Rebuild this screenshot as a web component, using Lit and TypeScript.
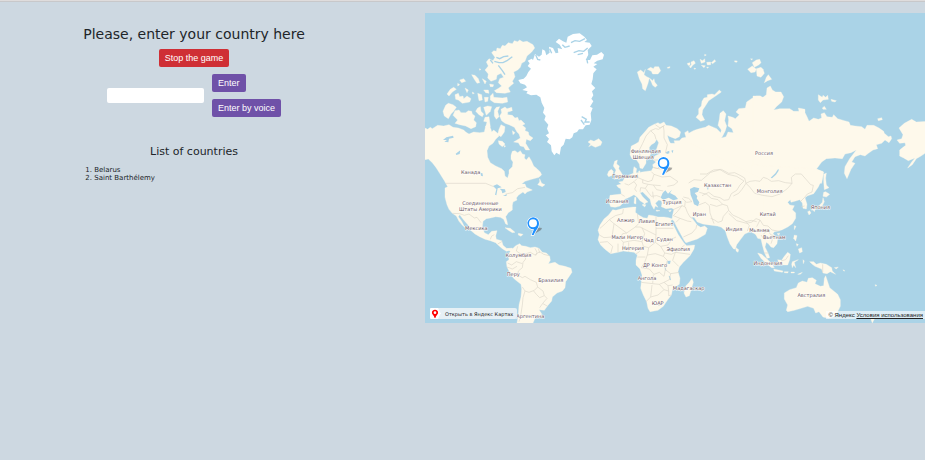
import { LitElement, html, svg, css } from "lit";
import { customElement, state } from "lit/decorators.js";

type Sheet = { x: number; y: number; d: string[] };
type Label = [number, number, string];

const land: Sheet[] = [
  { x: 0, y: 291, d: [
    "M-5,52 8,58 16,52 22,56 38,46 56,48 72,44 84,52 100,54 116,60 122,66 132,72 146,66 164,68 178,66 182,48 192,46 198,58 200,66 206,60 218,70 222,78 212,88 204,100 192,108 186,122 188,142 196,158 212,168 230,176 238,184 240,198 248,204 252,190 252,180 262,170 264,156 258,148 258,136 262,124 270,122 278,128 286,122 292,132 300,134 298,144 304,150 312,140 320,154 326,168 336,176 346,186 350,194 342,202 320,208 300,214 290,222 300,222 304,232 322,240 306,246 300,252 294,246 280,256 274,264 276,270 264,276 262,286 262,300 250,308 242,320 246,334 248,344 242,342 236,328 226,322 212,320 196,324 184,326 174,334 172,350 178,368 190,374 200,364 216,362 212,378 214,388 230,392 234,406 246,416 262,414 262,420 244,424 232,416 220,406 212,398 196,392 180,388 164,380 150,372 136,360 130,346 118,332 104,314 100,320 110,334 116,346 124,356 112,346 102,334 94,318 82,310 72,298 66,284 60,262 60,234 68,230 58,212 44,190 34,174 22,158 10,147 -5,150Z",
    "M344,206 350,220 360,224 352,230 338,224 344,216Z"
  ] },
  { x: 0, y: 456, d: [
    "M244,250 262,252 272,242 284,236 290,242 302,244 316,248 330,246 342,250 352,262 364,264 374,274 376,286 370,296 390,292 402,300 420,304 438,310 441,322 430,338 422,350 420,368 412,378 396,384 382,396 380,408 368,422 358,436 342,434 350,446 348,456 330,460 324,474 276,474 280,450 282,420 288,396 290,372 288,358 268,342 258,330 246,306 244,290 252,284 250,270 256,258Z",
    "M240,188 256,190 270,202 262,203 250,196Z", "M280,205 294,208 288,214 280,210Z"
  ] },
  { x: 0, y: -9, d: [
    "M200,128 206,122 214,124 216,114 226,116 232,106 240,108 250,98 262,101 268,92 278,95 284,90 294,96 306,94 324,104 329,114 320,126 306,138 300,154 290,160 286,172 278,180 266,186 270,200 262,214 266,220 256,228 250,234 256,246 240,250 214,248 208,242 222,234 230,228 220,218 224,206 236,202 228,190 216,196 214,208 198,214 188,204 190,192 180,180 190,168 184,156 192,146 204,152 210,142Z",
    "M196,258 204,250 206,262 232,264 246,262 248,276 232,280 208,278 196,270Z",
    "M158,250 170,254 172,270 162,272Z", "M178,262 190,262 188,274 180,276Z",
    "M140,194 150,196 160,206 164,218 156,220 148,208Z", "M172,206 184,214 180,222Z",
    "M66,252 76,238 86,232 94,238 82,246 72,258Z", "M104,210 116,206 122,214 110,218Z",
    "M90,254 100,250 104,260 114,258 116,266 126,258 138,266 134,276 112,280 100,270 92,268Z",
    "M120,234 130,240 126,248Z", "M176,240 190,240 192,250 182,248Z", "M194,222 206,224 204,230 196,230Z",
    "M98,220 104,224 98,228Z", "M142,246 148,250 143,252Z", "M163,176 168,178 164,181Z",
    "M62,286 70,280 84,284 94,292 86,304 78,312 70,326 58,318 54,304Z",
    "M84,316 90,302 102,300 108,308 122,308 130,302 140,304 142,312 150,318 146,330 154,338 152,350 138,356 122,348 104,344 90,340 98,330Z",
    "M176,292 188,288 200,290 196,304 184,316Z", "M158,294 166,290 168,304 176,312 172,320 162,314 152,304Z",
    "M180,322 192,320 196,350 190,362 182,350 186,336 176,334Z",
    "M208,300 214,292 224,290 218,304 222,320 214,328 208,318Z",
    "M228,298 240,291 246,296 260,292 262,302 248,306 248,314 262,316 270,324 278,322 282,332 288,330 300,342 292,346 302,354 300,362 310,366 312,376 324,384 316,392 304,388 302,400 314,420 302,420 296,410 286,408 280,398 266,396 276,390 286,384 282,372 276,366 268,352 252,344 240,340 230,332 224,318 230,308Z",
    "M228,344 240,350 238,366 228,380 218,374 222,358Z",
    "M220,392 232,394 240,402 232,410 222,402Z", "M262,362 270,368 264,374Z", "M236,406 242,408 238,412Z"
  ] },
  { x: 495, y: -9, d: [
    "M2,390 12,394 26,386 36,396 32,406 16,412 4,406 -4,410 2,402 -6,396Z",
    "M142,186 152,180 162,188 166,178 162,194 170,200 178,204 174,220 166,242 158,236 156,222 148,206Z",
    "M172,178 182,172 190,176 194,170 206,170 212,182 204,192 188,192 184,184Z",
    "M178,204 188,212 192,206 194,216 202,226 196,232 188,226 184,216Z", "M232,172 240,170 239,174 233,175Z",
    "M292,160 300,158 300,166 294,166Z", "M303,156 312,152 316,160 308,166 302,174 298,170 304,164Z",
    "M330,148 338,152 344,146 345,156 334,160Z", "M350,157 362,156 362,164 352,165Z", "M364,158 374,149 377,154 368,161Z",
    "M312,174 318,176 313,178Z", "M334,166 346,167 342,173Z", "M344,133 349,135 344,138Z", "M350,171 356,172 352,175Z", "M434,152 442,153 440,157 434,156Z", "M482,146 488,147 484,150Z",
    "M388,240 394,246 380,256 368,264 356,272 346,288 338,300 336,314 344,330 332,334 318,322 326,312 326,296 334,288 336,274 342,264 352,262 352,254 366,252 374,254Z",
    "M232,386 238,396 246,404 256,404 252,392 268,392 276,384 288,382 284,368 294,362 296,370 310,362 322,358 336,354 346,352 356,346 366,350 380,356 392,368 394,360 384,346 388,328 390,310 400,302 408,312 404,332 410,348 406,362 398,378 394,384 408,380 414,366 430,368 426,356 414,348 416,330 414,318 428,322 436,326 448,314 438,306 446,296 466,294 470,276 484,266 500,258 512,258 512,620 300,620 240,520 216,470Z"
  ] },
  { x: 990, y: -9, d: [
    "M-6,258 14,258 24,262 34,254 36,234 46,228 52,240 62,246 78,246 86,260 80,276 64,290 56,300 74,296 104,296 116,304 132,304 130,294 150,298 150,308 156,320 162,334 176,324 190,328 200,324 198,312 208,308 216,320 232,322 236,314 248,326 268,332 282,336 286,346 300,348 320,350 330,358 336,346 356,346 372,354 386,364 388,370 400,380 408,378 410,386 402,398 390,390 380,400 364,404 368,416 354,420 340,430 330,438 316,434 300,440 290,456 300,460 288,478 276,506 268,490 270,470 284,446 292,436 304,420 288,428 270,432 262,446 240,444 214,446 200,456 184,478 206,486 200,520 -6,520Z",
    "M432,354 448,340 470,328 484,336 516,334 516,426 498,438 484,446 472,464 458,474 470,456 480,444 460,452 446,444 434,438 434,420 444,412 452,406 450,398 434,400 426,390 440,386 444,374Z",
    "M368,326 380,323 382,329 370,332Z", "M190,254 202,262 204,256 212,262 218,256 220,268 204,270 196,278 190,270Z",
    "M228,268 244,272 240,276 230,274Z", "M202,294 208,289 214,298 204,298Z",
    "M-8,158 4,150 14,148 18,158 12,164 -2,172Z", "M4,176 18,172 24,178 28,190 18,202 6,198Z", "M34,202 40,194 50,208 38,212 28,218Z", "M-22,178 -8,168 4,178 0,186 -12,188Z"
  ] },
  { x: 990, y: 456, d: [
    "M-10,0 184,12 204,20 200,44 190,66 176,86 158,92 150,98 156,118 154,132 144,130 142,114 134,104 122,108 108,112 106,104 98,112 104,120 118,122 112,134 122,144 122,160 112,176 98,186 82,194 70,198 58,200 54,206 68,220 66,236 56,248 48,246 40,236 34,232 30,246 40,266 44,278 36,280 28,262 22,240 18,222 8,220 2,208 -10,202Z",
    "M206,28 214,24 212,40 214,60 222,68 208,74 206,50Z", "M206,82 212,80 224,88 214,96 204,94Z",
    "M204,98 208,110 200,126 184,132 170,136 178,128 192,122 202,112Z", "M158,140 164,137 168,144 162,150Z", "M174,136 180,135 178,140Z",
    "M118,182 123,184 118,194Z", "M118,210 126,212 122,228 116,220Z", "M130,252 140,248 142,260 134,264Z", "M124,236 130,238 126,244Z", "M66,206 74,204 72,211Z",
    "M8,264 20,268 36,282 50,296 58,308 50,308 32,294 18,280Z", "M56,312 84,318 82,322 58,318Z",
    "M68,284 80,286 88,274 98,262 106,268 104,284 98,300 84,300 72,294Z",
    "M112,290 130,284 118,292 122,308 116,300 112,308 110,298Z", "M88,320 100,320 98,324 88,323Z", "M108,321 118,321 118,324 108,324Z", "M128,328 142,322 136,328Z", "M144,284 148,288 145,296Z",
    "M164,290 176,290 184,298 196,294 214,298 230,308 232,318 242,328 226,320 216,326 204,324 200,312 180,304 172,298Z",
    "M238,308 250,306 244,312Z", "M264,314 270,318 266,318Z", "M360,359 366,361 362,364Z",
    "M88,384 104,374 124,368 130,354 142,348 156,352 160,340 172,338 184,346 180,356 196,364 206,362 208,340 212,332 218,350 224,368 236,378 248,388 256,404 256,424 246,444 236,456 220,460 204,456 192,440 182,444 176,430 158,424 138,430 118,436 98,440 94,436 98,420 88,402Z",
    "M346,458 358,462 352,474Z"
  ] },
  { x: 495, y: 291, d: [
    "M122,118 124,108 136,102 146,96 150,82 164,66 176,52 190,44 204,38 210,42 222,36 228,46 244,48 262,56 272,66 268,80 256,86 240,80 232,76 238,96 246,104 232,140 206,128 198,122 206,98 200,88 194,98 184,104 178,112 178,122 182,132 178,140 168,146 168,160 158,176 150,174 148,162 140,150 126,146 120,134Z",
    "M74,154 82,150 80,162 88,168 86,176 94,188 98,196 90,204 72,208 80,198 74,190 78,180 70,168Z", "M56,184 64,178 70,184 68,196 56,200 52,194Z",
    "M244,100 226,132 212,130 194,138 190,150 198,156 188,164 190,172 184,182 156,186 146,188 138,188 140,176 132,170 130,182 130,190 116,196 104,204 98,214 86,216 94,222 80,226 84,232 92,236 94,252 60,256 58,268 58,280 62,290 76,292 90,288 100,278 104,268 118,262 132,254 142,262 150,272 162,280 160,286 168,278 174,276 158,260 150,248 158,246 168,256 180,268 184,284 192,298 196,288 204,292 196,280 206,270 214,272 216,280 214,290 228,296 244,294 252,298 248,314 246,328 252,334 262,354 274,376 284,394 288,398 322,387 346,373 352,355 344,348 332,352 322,346 312,332 304,322 312,322 322,336 338,342 352,344 382,348 394,352 406,362 412,382 420,402 430,416 436,418 440,404 452,388 464,372 478,366 490,366 504,380 520,390 520,210 300,100Z",
    "M144,186 150,182 150,190Z", "M156,284 168,284 164,291Z", "M134,262 138,262 138,282 132,280Z", "M198,300 210,302 200,304Z", "M236,302 244,300 240,306Z"
  ] },
  { x: 495, y: 456, d: [
    "M68,134 78,136 100,130 130,126 138,126 136,142 146,150 160,158 172,160 176,150 190,152 204,156 222,156 236,158 248,162 242,168 252,184 264,208 272,220 282,234 290,242 314,240 312,252 300,272 280,292 268,306 264,320 270,340 268,358 248,372 244,390 232,406 220,424 204,436 180,440 174,430 170,410 160,390 152,370 154,352 156,330 150,312 138,300 138,286 142,270 132,262 116,260 100,258 84,262 62,266 44,252 32,240 24,224 28,208 24,196 30,180 42,162 56,150Z",
    "M306,340 310,352 304,372 298,392 288,396 282,384 288,362 298,352Z", "M438,248 446,254 444,262 438,258Z"
  ] }
];

const ice = "M308,152 320,146 324,150 330,132 342,140 350,134 352,118 360,122 364,136 374,128 372,110 384,114 392,130 400,128 398,114 412,118 404,104 392,96 402,86 414,94 424,98 428,80 444,72 464,70 478,80 486,90 478,96 494,98 500,108 488,120 490,134 482,150 495,150 502,136 516,134 529,126 537,134 533,148 517,152 506,160 517,162 505,170 515,178 505,190 503,208 499,222 511,234 501,244 505,256 499,266 505,274 495,290 503,294 497,310 499,330 494,344 482,346 474,358 462,358 456,366 446,370 442,382 434,388 422,386 416,404 408,412 404,434 394,428 388,436 380,424 378,406 366,396 372,386 362,376 372,370 366,356 370,344 358,330 362,318 354,308 358,294 350,278 346,262 334,254 318,256 304,250 308,244 292,240 306,232 300,224 286,220 280,210 296,206 304,198 310,186 318,176 308,168 314,160Z";

const water: Sheet[] = [
  { x: 495, y: 456, d: [
    "M212,98 218,84 226,76 234,86 246,74 240,84 256,92 264,102 250,106 236,98 220,104Z",
    "M300,72 312,66 328,70 324,80 314,84 322,94 320,100 328,112 324,124 312,118 308,104 302,90Z",
    "M232,288 242,287 240,297 233,296Z", "M223,300 226,301 229,318 225,314Z", "M236,332 240,334 243,346 239,344Z", "M350,66 356,66 354,76Z"
  ] },
  { x: 0, y: 291, d: [
    "M204,228 216,223 230,232 218,235 214,256 210,254 214,238Z", "M224,236 240,238 242,246 232,250 230,242Z", "M234,258 246,252 244,258Z",
    "M54,90 64,82 84,77 86,83 72,86 70,97 58,95 66,90Z", "M92,131 106,121 104,132 94,135Z", "M166,190 172,189 174,199 168,197Z"
  ] },
  { x: 825, y: 291, d: ["M212,203 226,190 235,176 236,182 228,194 216,205Z"] },
  { x: 495, y: 291, d: ["M228,126 238,122 238,130 230,132Z", "M244,122 250,120 248,130Z"] }
];

const inlets: Sheet[] = [
  { x: 0, y: -9, d: [
    "M208,154 222,158 234,158 246,152 262,140", "M220,166 232,182 240,194", "M214,142 224,146 236,140 250,138", "M204,160 196,150",
    "M438,98 450,92 464,94 480,86", "M446,128 462,122 476,124 488,114", "M458,134 474,130", "M412,104 420,112 434,108", "M332,134 338,148 346,150", "M374,116 380,130", "M494,132 486,150 488,160", "M470,320 484,328 480,336 494,336", "M468,330 478,344"
  ] }
];

const borders: Sheet[] = [
  { x: 0, y: 291, d: [
    "M62,220H182L206,230", "M242,252 262,248 278,236 290,234 300,232", "M82,310 104,311 118,316 132,312 148,324 156,322 168,338", "M196,388 200,378 208,374", "M218,402 232,394"
  ] },
  { x: 0, y: 456, d: [
    "M278,244 274,258 286,266 298,268 302,282 294,292 292,308", "M298,268 316,262 330,270 344,260 356,268 372,272", "M330,250 336,262 332,272", "M248,294 260,300 274,290 292,296", "M246,306 262,312 276,304", "M292,308 280,318 278,330 292,338 300,334 316,344 334,352 338,366 328,376 312,382 300,378 292,366", "M338,366 354,378 358,392 344,398 334,388 326,378", "M358,392 366,400 354,414 344,428", "M300,378 294,398 292,420 288,446 282,470", "M340,250 344,264", "M354,416 368,424"
  ] },
  { x: 495, y: 456, d: [
    "M100,132 98,146 76,152 58,164 46,176 30,190", "M58,164 72,176 110,204 136,186 146,176 142,146", "M136,186 150,186 198,210 198,156", "M198,190H250", "M72,176 66,216 42,218 28,210", "M66,216 90,220 98,206 110,204", "M90,220 100,232 120,228 132,226 156,230 164,206 156,188", "M100,232 98,258", "M62,266 68,244 52,230 30,232", "M84,262 84,236", "M116,260 116,232", "M156,230 160,244 146,262 138,266", "M160,244 176,248 196,232 198,210", "M196,232 212,244 234,240 246,222 258,216", "M212,244 224,264 244,268 256,262 284,240", "M256,262 300,268", "M256,262 248,286 266,304", "M224,264 220,274 232,286 230,294 226,314 242,326 268,322", "M220,274 196,266 172,270 164,292 154,308 178,312 192,328 208,322 222,334 226,314", "M176,248 172,270", "M142,276 166,276", "M154,352 188,356 208,358 222,352 238,344 242,326", "M188,356 190,328", "M186,360 182,396 168,410", "M182,396 204,390 222,374 208,358", "M222,374 236,378 236,392 244,390", "M222,352 234,362 248,360", "M236,378 234,362", "M204,414 214,408 216,418 206,422Z",
    "M250,134 276,122 286,126 292,142 300,156 306,160", "M250,152 262,140 276,122", "M250,152 270,160 292,168 304,170", "M270,160 258,172", "M280,216 306,204 318,190 320,180", "M280,96 296,100 306,110 290,112 276,100", "M286,108 284,124", "M326,120 346,112 358,122 360,144 366,160 372,176", "M296,54 312,44 334,46 348,34 362,22 390,14 414,28 440,34 462,48 450,60 440,76 424,86 416,104", "M328,82 350,88 364,100 384,104 398,118 380,124 360,118", "M336,92 356,82 372,94 390,98 402,106 416,104", "M398,118 412,122 416,136 400,154 396,168 384,172 372,164 362,160", "M416,136 428,150 446,158 468,170 484,166 500,170", "M468,170 478,182 472,198",
    "M142,26 144,38 132,50 140,60 134,72 140,80", "M144,38 158,44 174,50 186,46 192,28 184,20", "M132,50 116,60 104,56", "M158,44 158,54 174,58 190,60 212,62", "M174,58 166,70 176,84 184,94", "M190,60 200,74 220,78", "M166,70 152,68 150,80", "M184,94 200,92 212,96", "M188,80 190,100", "M192,28 216,36 240,34 264,50 252,60 232,64", "M190,8 210,12 226,8", "M94,88 104,94"
  ] },
  { x: 495, y: 291, d: ["M150,142 148,120 158,100 168,78 182,62 196,56 206,58", "M182,62 194,74 198,88", "M206,58 220,48 222,62 222,84 232,104 226,130", "M196,44 210,54 224,46", "M190,150 212,150", "M190,172 204,176 210,160 214,140"] },
  { x: 825, y: 291, d: [
    "M138,220 150,214 166,212 180,214 190,202 202,206 214,214 236,212 256,218 276,220 262,236 240,252 216,260 188,256 164,250 150,232 138,220 126,238 116,250 100,258", "M276,220 274,202 286,192 304,192 318,208 332,224 340,226 336,246 322,252 314,262 302,274", "M0,192 20,192 40,180 64,178 86,190 104,188 120,196 134,204 138,220", "M304,290 314,288", "M86,310 110,332 140,340 156,336 168,326 180,330 190,346 204,348 216,360 238,364", "M180,330 170,350", "M190,372 204,362 212,374 230,380"
  ] },
  { x: 990, y: 456, d: ["M18,210 28,224 40,218 52,224 48,236", "M203,298V322", "M78,288 92,284 100,272", "M28,264 40,264"] }
];

const labels: Label[] = [
  [137, 483, "Канада"], [166, 576, "Соединенные"], [166, 594, "Штаты Америки"], [154, 650, "Мексика"], [280, 733, "Колумбия"],
  [265, 788, "Перу"], [377, 808, "Бразилия"], [316, 915, "Аргентина"], [662, 419, "Финляндия"], [655, 437, "Швеция"], [1017, 425, "Россия"],
  [600, 496, "Германия"], [576, 570, "Испания"], [741, 574, "Турция"], [878, 523, "Казахстан"], [823, 610, "Иран"], [602, 628, "Алжир"],
  [665, 631, "Ливия"], [718, 639, "Египет"], [580, 678, "Мали"], [630, 678, "Нигер"], [671, 686, "Чад"], [719, 685, "Судан"],
  [624, 711, "Нигерия"], [760, 714, "Эфиопия"], [690, 762, "ДР Конго"], [666, 802, "Ангола"], [791, 831, "Мадагаскар"], [698, 875, "ЮАР"],
  [927, 653, "Индия"], [1003, 657, "Мьянма"], [1034, 539, "Монголия"], [1028, 609, "Китай"], [1048, 679, "Вьетнам"], [1186, 588, "Япония"],
  [1029, 755, "Индонезия"], [1159, 853, "Австралия"]
];

const sheets = (list: Sheet[]) => list.map((s) => svg`<g transform="translate(${s.x} ${s.y})">${s.d.map((d) => svg`<path d=${d} />`)}</g>`);

@customElement("world-map")
class WorldMap extends LitElement {
  static styles = css`
    :host { display: block; position: relative; font-family: "Liberation Sans", Arial, sans-serif; }
    .map { display: block; width: 100%; background: #aad3e7; }
    .land { fill: #fef9eb; stroke: #fef9eb; stroke-width: 1; stroke-linejoin: round; }
    .ice { fill: #fff; }
    .water { fill: #aad3e7; }
    .inlets { fill: none; stroke: #aad3e7; stroke-width: 4; }
    .borders { fill: none; stroke: #dcd8cc; stroke-width: 2; stroke-linejoin: round; }
    .label { font: 15px "DejaVu Sans", sans-serif; fill: #6b5660; stroke: #fff; stroke-width: 3; stroke-linejoin: round; paint-order: stroke; text-anchor: middle; }
    .shade { fill: #555; opacity: 0.5; }
    .halo { fill: #fff; stroke: #fff; stroke-width: 4; }
    .pin { fill: #1e90ff; }
    .hole { fill: #fff; }
    .open { position: absolute; left: 5px; bottom: 4px; display: flex; align-items: center; height: 11px; background: #e6f0f5; border-radius: 2px; color: #222; font-family: "DejaVu Sans", sans-serif; font-size: 5px; text-decoration: none; padding-right: 4px; }
    .logo { width: 11px; height: 11px; margin-right: 4px; }
    .copy { position: absolute; right: 0; bottom: 4px; padding: 0 2px; background: rgba(255, 255, 255, 0.6); color: #222; font-size: 6px; line-height: 8px; }
    .terms { color: inherit; }
  `;

  private pin(x: number, y: number) {
    return svg`<g transform="translate(${x} ${y})">
      <path class="shade" d="M0,34 L10,12 L27,14 L24,20 Z" />
      <path class="halo" d="M0,-18 A18,18 0 0 1 18,0 C18,14 8,20 2,35 L-4,35 L3,18 A18,18 0 1 1 0,-18Z" />
      <path class="pin" d="M0,-18 A18,18 0 0 1 18,0 C18,14 8,20 2,35 L-4,35 L3,18 A18,18 0 1 1 0,-18Z" />
      <circle class="hole" r="12" />
    </g>`;
  }

  render() {
    return html`
      <svg class="map" viewBox="0 0 1500 930" role="img" aria-label="World map">
        <g class="land">${sheets(land)}</g>
        <path class="ice" transform="translate(0 -9)" d=${ice} />
        <g class="water">${sheets(water)}</g>
        <g class="inlets">${sheets(inlets)}</g>
        <g class="borders">${sheets(borders)}</g>
        ${labels.map(([x, y, t]) => svg`<text class="label" x=${x} y=${y}>${t}</text>`)}
        ${this.pin(324, 631)} ${this.pin(715, 450)}
      </svg>
      <a class="open" href="#map">
        <svg class="logo" viewBox="0 0 33 33">
          <path fill="#fff" d="M4,0H24L32,16L24,33H4Q0,33 0,29V4Q0,0 4,0Z" />
          <path fill="#f00" d="M15,5A9,9 0 0 1 21,21Q17,24 17,29H13Q13,24 9,21A9,9 0 0 1 15,5Z" />
          <circle cx="15" cy="14" r="4" fill="#fff" />
        </svg>Открыть в Яндекс Картах</a>
      <div class="copy">© Яндекс <a class="terms" href="#terms">Условия использования</a></div>
    `;
  }
}

@customElement("app-root")
class AppRoot extends LitElement {
  @state() countries = ["Belarus", "Saint Barthélemy"];

  static styles = css`
    :host { display: block; min-height: 100vh; box-sizing: border-box; background: #cdd8e1; border-top: 1px solid #dfdcdc; color: #212529; font-family: Verdana, "DejaVu Sans", sans-serif; }
    .page { display: grid; grid-template-columns: 17fr 20fr; align-items: start; border-top: 1px solid #c8c8ca; padding-top: 11px; }
    .game { display: flex; flex-direction: column; align-items: center; padding: 12px 37px 0 0; }
    .panel { display: flex; flex-direction: column; align-items: center; }
    .title { margin: 0 0 6px; font-size: 14px; line-height: 18px; font-weight: 400; white-space: nowrap; }
    .button { height: 18px; padding: 0 6px; border: 0; border-radius: 2px; background: #6f51a8; color: #fff; font: 9px "Liberation Sans", Arial, sans-serif; }
    .stop { background: #cf2f35; }
    .form { display: flex; align-items: center; gap: 8px; margin: 7px 0 28px; }
    .field { width: 97px; height: 15px; box-sizing: border-box; border: 0; border-radius: 2px; background: #fff; padding: 0 4px; font-size: 9px; }
    .actions { display: flex; flex-direction: column; align-items: flex-start; gap: 7px; }
    .subtitle { margin: 0 0 8px; font-size: 11px; line-height: 13px; font-weight: 400; }
    .list { align-self: stretch; margin: 0; padding-left: 11px; font-size: 7px; line-height: 8px; }
  `;

  render() {
    return html`
      <main class="page">
        <section class="game">
          <div class="panel">
            <h1 class="title">Please, enter your country here</h1>
            <button class="button stop" type="button">Stop the game</button>
            <form class="form" @submit=${(e: Event) => e.preventDefault()}>
              <input class="field" type="text" aria-label="Country" />
              <div class="actions">
                <button class="button" type="submit">Enter</button>
                <button class="button" type="button">Enter by voice</button>
              </div>
            </form>
            <h2 class="subtitle">List of countries</h2>
            <ol class="list">${this.countries.map((c) => html`<li>${c}</li>`)}</ol>
          </div>
        </section>
        <world-map></world-map>
      </main>
    `;
  }
}
